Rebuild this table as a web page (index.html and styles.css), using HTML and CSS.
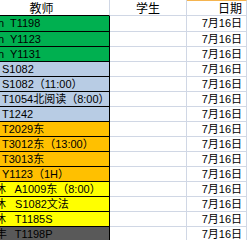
FILE: index.html
```html
<!DOCTYPE html>
<html>
<head>
<meta charset="utf-8">
<link rel="stylesheet" href="styles.css">
</head>
<body>
<div class="sheet">
  <div class="cell head a">教师</div>
  <div class="cell head b">学生</div>
  <div class="cell head c sel">日期</div>

  <div class="cell a green"><span class="cut cut-n">n</span> T1198</div><div class="cell b"></div><div class="cell c">7月16日</div>
  <div class="cell a green"><span class="cut cut-n">n</span> Y1123</div><div class="cell b"></div><div class="cell c">7月16日</div>
  <div class="cell a green"><span class="cut cut-n">n</span> Y1131</div><div class="cell b"></div><div class="cell c">7月16日</div>
  <div class="cell a blue">S1082</div><div class="cell b"></div><div class="cell c">7月16日</div>
  <div class="cell a blue">S1082（11:00）</div><div class="cell b"></div><div class="cell c">7月16日</div>
  <div class="cell a blue">T1054北阅读（8:00）</div><div class="cell b"></div><div class="cell c">7月16日</div>
  <div class="cell a blue">T1242</div><div class="cell b"></div><div class="cell c">7月16日</div>
  <div class="cell a orange">T2029东</div><div class="cell b"></div><div class="cell c">7月16日</div>
  <div class="cell a orange">T3012东（13:00）</div><div class="cell b"></div><div class="cell c">7月16日</div>
  <div class="cell a orange">T3013东</div><div class="cell b"></div><div class="cell c">7月16日</div>
  <div class="cell a orange">Y1123（1H）</div><div class="cell b"></div><div class="cell c">7月16日</div>
  <div class="cell a yellow"><span class="cut cut-cjk">沐</span> A1009东（8:00）</div><div class="cell b"></div><div class="cell c">7月16日</div>
  <div class="cell a yellow"><span class="cut cut-cjk">沐</span> S1082文法</div><div class="cell b"></div><div class="cell c">7月16日</div>
  <div class="cell a yellow"><span class="cut cut-cjk">沐</span> T1185S</div><div class="cell b"></div><div class="cell c">7月16日</div>
  <div class="cell a gray"><span class="cut cut-feng">丰</span> T1198P</div><div class="cell b"></div><div class="cell c">7月16日</div>
</div>
</body>
</html>
```
FILE: styles.css
```css
html, body {
  margin: 0;
  padding: 0;
  background: #ffffff;
}
body {
  width: 247px;
  height: 240px;
  overflow: hidden;
}
.sheet {
  display: grid;
  grid-template-columns: 110px 77px 60px;
  grid-template-rows: 16px 16px repeat(14, 15px);
  font-family: "Liberation Sans", "Noto Sans CJK SC", sans-serif;
  font-size: 11px;
  color: #000000;
}
.cell {
  box-sizing: border-box;
  border-right: 1px solid #d0d7e5;
  border-bottom: 1px solid #d0d7e5;
  overflow: hidden;
  white-space: nowrap;
  line-height: 14px;
}
.head {
  font-family: "Noto Sans CJK SC", sans-serif;
  font-size: 12px;
  line-height: 15px;
  text-align: center;
}
.head.a {
  padding-right: 26px;
  padding-left: 0;
  border-bottom-color: #000000;
}
.head.sel {
  border-top: 1px solid #f5b44f;
  line-height: 14px;
}
.a {
  padding-left: 2px;
  border-right-color: #000000;
}
.head.a {
  border-right-color: #d0d7e5;
}
.green, .blue, .orange, .yellow, .gray {
  border-bottom-color: #000000;
}
.green { background: #00b050; line-height: 15px; }
.green ~ .green { line-height: 14px; }
.blue { background: #b8cce4; }
.orange { background: #ffc000; }
.yellow { background: #ffff00; }
.gray { background: #595959; }
.c {
  text-align: right;
  padding-right: 4px;
}
.cut {
  display: inline-block;
}
.cut-n { margin-left: -4px; margin-right: 3px; }
.cut-cjk { margin-left: -7px; margin-right: 6px; }
.cut-feng { margin-left: -6px; margin-right: 5px; }
```
